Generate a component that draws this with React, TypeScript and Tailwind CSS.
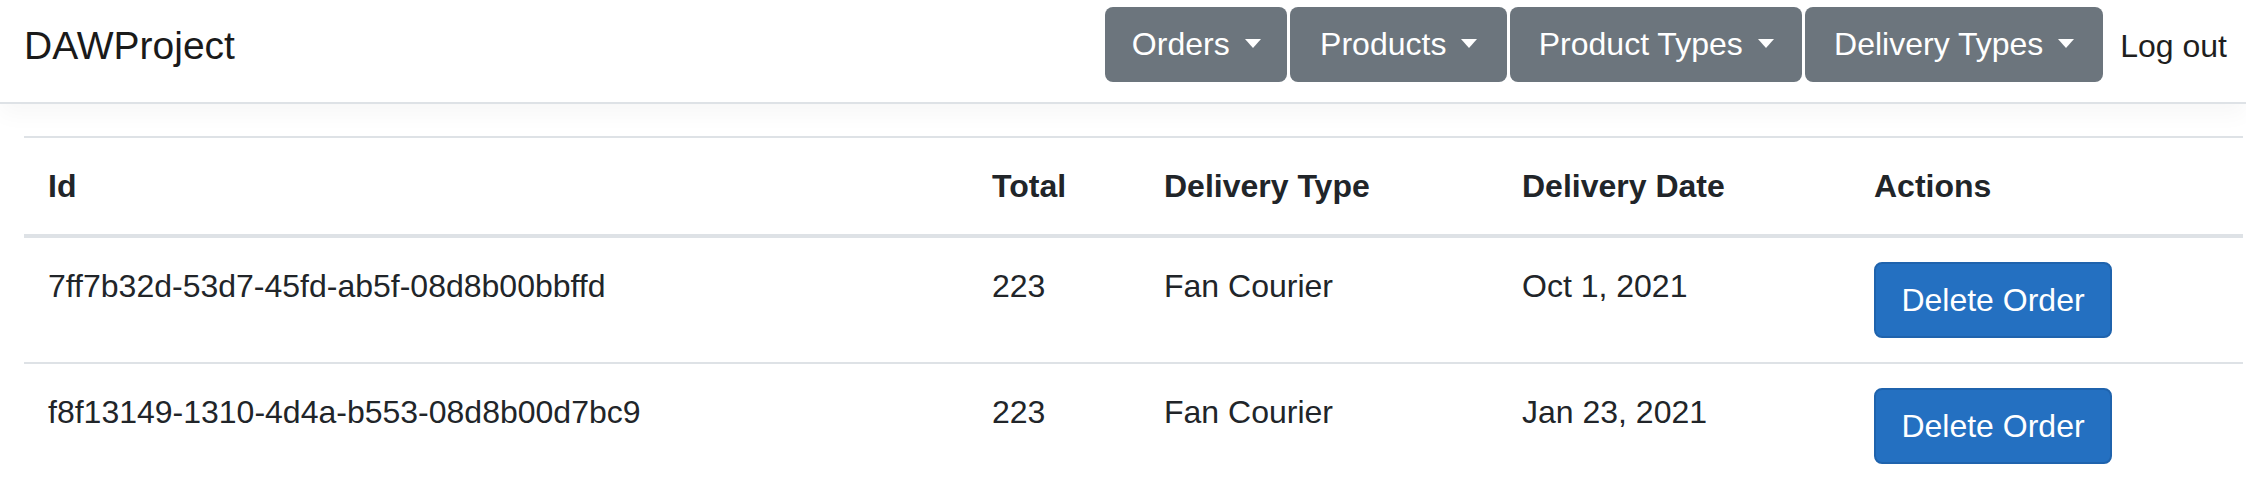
import React from "react";

const navItems = [
  { label: "Orders", w: "w-[182px]" },
  { label: "Products", w: "w-[217px]" },
  { label: "Product Types", w: "w-[292px]" },
  { label: "Delivery Types", w: "w-[298px]" },
];

const rows = [
  { id: "7ff7b32d-53d7-45fd-ab5f-08d8b00bbffd", total: "223", type: "Fan Courier", date: "Oct 1, 2021" },
  { id: "f8f13149-1310-4d4a-b553-08d8b00d7bc9", total: "223", type: "Fan Courier", date: "Jan 23, 2021" },
];

function Caret() {
  return (
    <span className="ml-[15px] inline-block w-0 h-0 border-l-[8px] border-r-[8px] border-t-[9px] border-l-transparent border-r-transparent border-t-white translate-y-[-1px]" />
  );
}

export default function App() {
  return (
    <div className="min-h-[500px] bg-white text-[#212529] font-['Liberation_Sans',Arial,sans-serif] overflow-hidden">
      <nav className="relative z-10 h-[104px] border-b-2 border-[#dee2e6] bg-white pb-[14px] pl-[24px] pr-[19px] flex items-center justify-between shadow-[0_10px_22px_rgba(0,0,0,0.035)]">
        <div className="text-[39px] leading-[60px] text-[#1a1a1a] translate-y-[2px]">DAWProject</div>
        <div className="flex items-center">
          <div className="flex gap-[3px]">
            {navItems.map((n) => (
              <button
                key={n.label}
                className={`${n.w} h-[75px] rounded-[8px] bg-[#6c757d] text-white text-[32px] leading-[48px] flex items-center justify-center`}
              >
                <span>{n.label}</span>
                <Caret />
              </button>
            ))}
          </div>
          <a className="ml-[17px] text-[32px] leading-[48px] text-[#1f1f1f] translate-y-[2px]">Log out</a>
        </div>
      </nav>
      <div className="pt-[32px] pl-[24px] pr-[3px]">
        <table className="w-[2219px] table-fixed border-collapse text-[32px] leading-[48px]">
          <colgroup>
            <col className="w-[944px]" />
            <col className="w-[172px]" />
            <col className="w-[358px]" />
            <col className="w-[352px]" />
            <col />
          </colgroup>
          <thead>
            <tr>
              {["Id", "Total", "Delivery Type", "Delivery Date", "Actions"].map((h) => (
                <th
                  key={h}
                  className="text-left font-bold align-bottom px-[24px] py-[24px] border-t-2 border-b-4 border-[#dee2e6]"
                >
                  {h}
                </th>
              ))}
            </tr>
          </thead>
          <tbody>
            {rows.map((r) => (
              <tr key={r.id}>
                <td className="align-top px-[24px] py-[24px] border-t-2 border-[#dee2e6] whitespace-nowrap">{r.id}</td>
                <td className="align-top px-[24px] py-[24px] border-t-2 border-[#dee2e6]">{r.total}</td>
                <td className="align-top px-[24px] py-[24px] border-t-2 border-[#dee2e6]">{r.type}</td>
                <td className="align-top px-[24px] py-[24px] border-t-2 border-[#dee2e6]">{r.date}</td>
                <td className="align-top px-[24px] py-[24px] border-t-2 border-[#dee2e6]">
                  <button className="w-[238px] h-[76px] rounded-[8px] bg-[#2470c1] border-2 border-[#1f63ad] text-white text-[32px] leading-[48px] flex items-center justify-center">
                    Delete Order
                  </button>
                </td>
              </tr>
            ))}
          </tbody>
        </table>
      </div>
    </div>
  );
}
